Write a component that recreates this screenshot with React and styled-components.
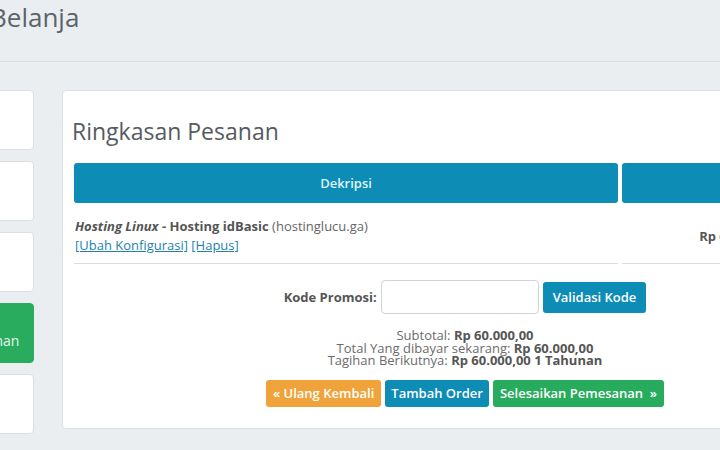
import React from "react";
import styled, { createGlobalStyle } from "styled-components";

const GlobalStyle = createGlobalStyle`
  html, body {
    margin: 0;
    padding: 0;
    background: #ebeef0;
    overflow: hidden;
    font-family: "Open Sans", "Liberation Sans", sans-serif;
  }
`;

const App = () => {
  return (
    <Page>
      <GlobalStyle />
      <Header>
        <Title>Belanja</Title>
      </Header>
      <Body>
        <Sidebar>
          <NavItem />
          <NavItem />
          <NavItem />
          <NavItem active>
            <span>Pesanan</span>
          </NavItem>
          <NavItem />
        </Sidebar>
        <Panel>
          <PanelTitle>Ringkasan Pesanan</PanelTitle>
          <Table>
            <HeadCell>Dekripsi</HeadCell>
            <HeadCell>Harga</HeadCell>
            <Cell>
              <div>
                <b>
                  <i>Hosting Linux</i> - Hosting idBasic
                </b>{" "}
                <Muted>(hostinglucu.ga)</Muted>
              </div>
              <div>
                <Link href="#">[Ubah Konfigurasi]</Link>{" "}
                <Link href="#">[Hapus]</Link>
              </div>
            </Cell>
            <Cell center>
              <b>Rp 60.000,00</b>
            </Cell>
          </Table>

          <PromoRow>
            <Label>Kode Promosi:</Label>
            <Input type="text" />
            <Button color="#0d8cb5" pad="10px">
              Validasi Kode
            </Button>
          </PromoRow>

          <Totals>
            <div>
              Subtotal: <b>Rp 60.000,00</b>
            </div>
            <div>
              Total Yang dibayar sekarang: <b>Rp 60.000,00</b>
            </div>
            <div>
              Tagihan Berikutnya: <b>Rp 60.000,00 1 Tahunan</b>
            </div>
          </Totals>

          <Actions>
            <Button color="#f0a33a">« Ulang Kembali</Button>
            <Button color="#0d8cb5">Tambah Order</Button>
            <Button color="#27ab5c">Selesaikan Pemesanan &nbsp;»</Button>
          </Actions>
        </Panel>
      </Body>
    </Page>
  );
};

// layout
const Page = styled.div`
  width: 900px;
`;

const Header = styled.div`
  height: 62px;
  border-bottom: 1px solid #d7dbde;
  box-sizing: border-box;
`;

const Title = styled.h1`
  margin: 0 0 0 -10px;
  font-size: 26px;
  font-weight: 400;
  line-height: 34px;
  color: #5c636a;
`;

const Body = styled.div`
  display: flex;
  align-items: flex-start;
  gap: 28px;
  margin-top: 28px;
`;

const Sidebar = styled.div`
  flex: none;
  width: 85px;
  margin-left: -51px;
  display: flex;
  flex-direction: column;
  gap: 11px;
`;

const NavItem = styled.div`
  height: 60px;
  box-sizing: border-box;
  border-radius: 4px;
  border: 1px solid ${(p) => (p.active ? "#29ac5e" : "#dcdfe2")};
  background: ${(p) => (p.active ? "#29ac5e" : "#fff")};
  color: #e6f7ed;
  font-size: 14px;
  display: flex;
  align-items: flex-end;
  justify-content: center;
  padding-bottom: 12px;
`;

const Panel = styled.div`
  flex: none;
  width: 806px;
  box-sizing: border-box;
  background: #fff;
  border: 1px solid #dde0e3;
  border-radius: 4px;
  padding: 0 11px 21px;
  color: #555;
  font-size: 13px;
`;

const PanelTitle = styled.h2`
  margin: 25px 0 16px -2px;
  font-size: 23px;
  font-weight: 400;
  line-height: 31px;
  color: #555b61;
`;

// order table
const Table = styled.div`
  display: grid;
  grid-template-columns: 544px 1fr;
  column-gap: 4px;
`;

const HeadCell = styled.div`
  height: 40px;
  border-radius: 3px;
  background: #0d8cb5;
  color: #dff4fb;
  font-weight: 600;
  display: flex;
  align-items: center;
  justify-content: center;
`;

const Cell = styled.div`
  border-bottom: 1px solid #dcdcdc;
  padding: 14px 1px 8px;
  line-height: 19px;
  display: flex;
  flex-direction: column;
  justify-content: center;
  align-items: ${(p) => (p.center ? "center" : "flex-start")};
  b {
    font-weight: 700;
  }
`;

const Muted = styled.span`
  color: #666;
`;

const Link = styled.a`
  color: #1d82ad;
  text-decoration: underline;
`;

// promo + totals
const PromoRow = styled.div`
  display: flex;
  align-items: center;
  justify-content: center;
  gap: 4px;
  margin-top: 16px;
`;

const Label = styled.span`
  font-weight: 700;
  color: #555;
`;

const Input = styled.input`
  width: 158px;
  height: 34px;
  box-sizing: border-box;
  border: 1px solid #cfd3d6;
  border-radius: 4px;
  outline: none;
`;

const Button = styled.button`
  height: 31px;
  padding: 0 ${(p) => p.pad || "6.5px"};
  border: none;
  border-radius: 3px;
  background: ${(p) => p.color};
  color: #fff;
  font-family: inherit;
  font-size: 13px;
  font-weight: 600;
`;

const Totals = styled.div`
  margin-top: 15px;
  text-align: center;
  line-height: 12.5px;
  color: #6b6b6b;
  b {
    color: #555;
    font-weight: 700;
  }
`;

const Actions = styled.div`
  display: flex;
  justify-content: center;
  gap: 4px;
  margin-top: 13px;
  ${Button} {
    height: 27px;
  }
`;

export default App;
